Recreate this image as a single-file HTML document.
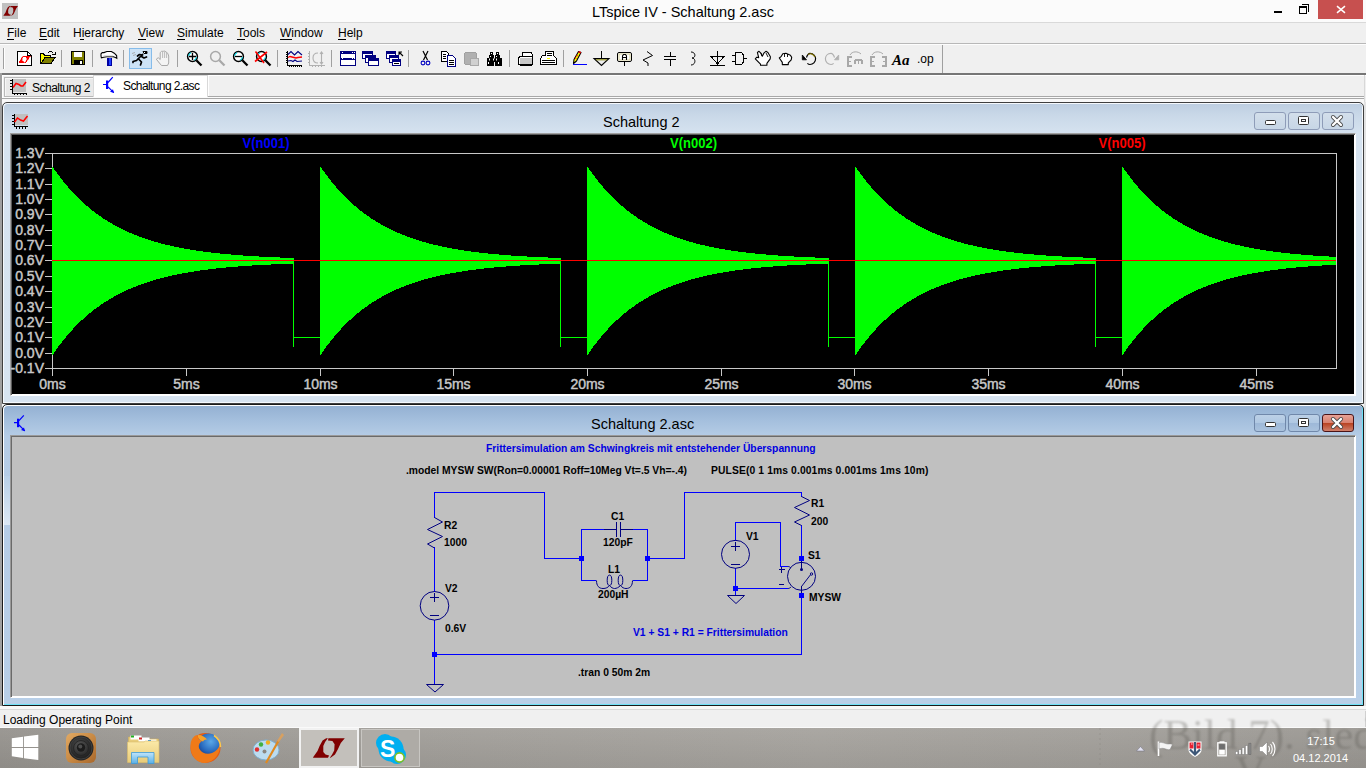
<!DOCTYPE html>
<html><head><meta charset="utf-8"><title>LTspice IV - Schaltung 2.asc</title>
<style>
*{margin:0;padding:0;box-sizing:border-box}
html,body{width:1366px;height:768px;overflow:hidden;background:#f0f0f0;font-family:"Liberation Sans",sans-serif;position:relative}
.a{position:absolute}
svg text{white-space:pre}
</style></head>
<body>
<div class="a" style="left:0;top:0;width:1366px;height:22px;background:#fbfbfb"></div>
<div class="a" style="left:0;top:22px;width:1366px;height:1px;background:#d9d9d9"></div>
<div class="a" style="left:0;top:43px;width:1366px;height:1px;background:#b8b8b8"></div>
<div class="a" style="left:0;top:44px;width:1366px;height:1px;background:#fdfdfd"></div>
<div class="a" style="left:0;top:73px;width:1366px;height:2px;background:#767676"></div>
<div class="a" style="left:0;top:75px;width:1366px;height:1px;background:#fff"></div>
<div class="a" style="left:1364px;top:75px;width:1px;height:27px;background:#d8d8d8"></div>
<!-- tabs -->
<div class="a" style="left:207px;top:75px;width:1157px;height:22px;background:#f0f0f0;border-left:1px solid #a0a0a0;border-bottom:1px solid #a8a8a8;box-shadow:inset 1px 1px 0 #fff"></div>
<div class="a" style="left:4px;top:77px;width:90px;height:20px;background:#e9e9e9;border:1px solid #b8b8b8;box-shadow:inset 1px 1px 0 #f6f6f6"></div>
<div class="a" style="left:93px;top:75px;width:115px;height:22px;background:#fff;border:1px solid #d9d9d9;border-bottom:none"></div>
<div class="a" style="left:0;top:97px;width:1364px;height:1px;background:#fbfbfb"></div>
<div class="a" style="left:0;top:98px;width:1364px;height:1px;background:#a8a8a8"></div>
<div class="a" style="left:0;top:99px;width:1364px;height:607px;background:#f8f8f8"></div>
<div class="a" style="left:0;top:73px;width:2px;height:633px;background:#a0a0a0"></div>
<div class="a" style="left:2px;top:76px;width:1px;height:22px;background:#fff"></div>
<div class="a" style="left:1364px;top:102px;width:2px;height:604px;background:#e3e3e3"></div>
<!-- plot window -->
<div class="a" style="left:2px;top:102px;width:1362px;height:302px;border:1px solid #3f3f3f;border-radius:5px 5px 0 0;background:linear-gradient(#bccde0,#c9d8e8 12px,#d6e3f0 31px,#d7e4f1);box-shadow:inset 1px 1px 0 #f4f8fc,inset -1px -1px 0 #f4f8fc"></div>
<div class="a" style="left:10px;top:133px;width:1346px;height:263px;background:#000;border-top:1px solid #a0a0a0;border-left:1px solid #a0a0a0;border-right:1px solid #fff;border-bottom:1px solid #fff;box-shadow:inset 1px 1px 0 #5a5a5a,inset -1px -1px 0 #fff"></div>
<div class="a" style="left:1254px;top:112px;width:32px;height:18px;border:1px solid #8e9cb8;border-radius:3px;background:linear-gradient(#d3dfeb,#c7d6e6)"></div>
<div class="a" style="left:1288px;top:112px;width:32px;height:18px;border:1px solid #8e9cb8;border-radius:3px;background:linear-gradient(#d3dfeb,#c7d6e6)"></div>
<div class="a" style="left:1322px;top:112px;width:32px;height:18px;border:1px solid #8e9cb8;border-radius:3px;background:linear-gradient(#d3dfeb,#c7d6e6)"></div>
<!-- schematic window -->
<div class="a" style="left:2px;top:404px;width:1362px;height:302px;border:1px solid #1a1a1a;border-radius:5px 5px 0 0;background:linear-gradient(#93b0d2,#a4bfdd 15px,#b5cce6 31px,#b8cfe8);box-shadow:inset 1px 1px 0 #fff,inset -1px -1px 0 #6ee2f8"></div>
<div class="a" style="left:10px;top:435px;width:1346px;height:263px;background:#c0c0c0;border-top:1px solid #9a9a9a;border-left:1px solid #9a9a9a;border-right:1px solid #fff;border-bottom:1px solid #fff;box-shadow:inset 1px 1px 0 #6a6a6a,inset -1px -1px 0 #fff"></div>
<div class="a" style="left:1254px;top:414px;width:32px;height:18px;border:1px solid #7088aa;border-radius:3px;background:linear-gradient(#bcd0e6 0,#b0c8e2 50%,#9db8d8 50%,#aac2dd)"></div>
<div class="a" style="left:1288px;top:414px;width:32px;height:18px;border:1px solid #7088aa;border-radius:3px;background:linear-gradient(#bcd0e6 0,#b0c8e2 50%,#9db8d8 50%,#aac2dd)"></div>
<div class="a" style="left:1322px;top:414px;width:32px;height:18px;border:1px solid #4a1418;border-radius:3px;background:linear-gradient(#e8a296 0,#d8806e 50%,#b8401f 50%,#d0806c)"></div>
<div class="a" style="left:4px;top:476px;width:6px;height:49px;background:linear-gradient(#b9d0e8,#dce8f4)"></div>
<!-- status -->
<div class="a" style="left:0;top:706px;width:1366px;height:3px;background:#f8f8f8"></div>
<div class="a" style="left:0;top:709px;width:1366px;height:1px;background:#dadada"></div>
<div class="a" style="left:0;top:710px;width:1366px;height:17px;background:#f0f0f0"></div>
<div class="a" style="left:0;top:727px;width:1366px;height:1px;background:#fafafa"></div>
<div class="a" style="left:1365px;top:711px;width:1px;height:16px;background:#d0d0d0"></div>
<!-- taskbar -->
<div class="a" style="left:0;top:728px;width:1366px;height:40px;background:linear-gradient(rgba(255,255,255,0.05),rgba(0,0,0,0.05)),linear-gradient(90deg,#96938e,#9c9994 10%,#a29f9a 35%,#a6a39e 60%,#a29f9a 80%,#9a9792)"></div>
<svg class="a" style="left:0;top:0" width="1366" height="768" viewBox="0 0 1366 768" font-family="Liberation Sans">
<g fill="#000" font-size="14.5">
 <text x="592" y="16.5">LTspice IV - Schaltung 2.asc</text>
 <text x="603" y="127">Schaltung 2</text>
 <text x="591" y="428.5">Schaltung 2.asc</text>
</g>
<g fill="#000" font-size="12">
 <text x="7" y="37">File</text><text x="39" y="37">Edit</text><text x="73" y="37">Hierarchy</text><text x="138" y="37">View</text><text x="177" y="37">Simulate</text><text x="237" y="37">Tools</text><text x="280" y="37">Window</text><text x="338" y="37">Help</text>
 <text x="32" y="91.5" letter-spacing="-0.5">Schaltung 2</text>
 <text x="123" y="90" letter-spacing="-0.6">Schaltung 2.asc</text>
 <text x="3" y="724">Loading Operating Point</text>
</g>
<g stroke="#000" shape-rendering="crispEdges">
 <path d="M7,39.5H14M39,39.5H47M80,39.5H84M138,39.5H146M177,39.5H185M237,39.5H245M280,39.5H292M338,39.5H346"/>
</g>
<!-- title icon -->
<rect x="2" y="3" width="16" height="16" fill="#c0c0c0"/>
<path d="M10.27,6.00L9.49,6.00L7.85,7.21L6.52,9.77L5.51,12.48L3.50,15.60L3.50,15.80L10.32,15.80L10.82,14.69L9.17,14.14L8.17,12.89L8.17,9.92L8.99,7.91ZM10.50,6.00L18.00,6.00L16.17,8.46L14.84,11.58L13.52,14.14L11.50,15.80L11.18,15.80L12.19,14.14L13.15,12.13L13.33,9.02L12.33,7.36L10.32,7.21Z" fill="#800000"/>
<!-- window controls main -->
<g stroke="#000" fill="none" shape-rendering="crispEdges">
 <path d="M1274,12H1282" stroke-width="2"/>
 <rect x="1299.5" y="6.5" width="7" height="7"/><path d="M1300,7.5H1306"/><path d="M1301.5,4.5H1308.5V11.5"/>
</g>
<rect x="1318" y="0" width="45" height="19" fill="#c7504f"/>
<path d="M1337,6.2L1345,12.8M1345,6.2L1337,12.8" stroke="#fff" stroke-width="1.5"/>
<!-- tab icons -->
<g shape-rendering="crispEdges">
 <rect x="13" y="79" width="13" height="13" fill="#c0c0c0"/>
 <path d="M12.5,79V93.5H26M10,80.5H12M10,83.5H12M10,86.5H12M10,89.5H12M14.5,93V95M17.5,93V95M20.5,93V95M23.5,93V95M26.5,93V95" stroke="#000" fill="none"/>
</g>
<path d="M13,87.5L16,83.5L19,84.5L21,86L23,86L26,82" stroke="#ff0000" stroke-width="1.6" fill="none"/>
<path d="M103,84.5H106.5M108,82.5L112.8,77.2M108,86.8L113.8,92.6" stroke="#0000ff" stroke-width="1.2" fill="none"/><rect x="106" y="80.5" width="2.2" height="8.5" fill="#0000ff"/><path d="M110,91.8L114,93L113,89.2Z" fill="#0000ff"/>
<rect x="52.5" y="153.5" width="1284" height="215" fill="none" stroke="#c8c8c8" shape-rendering="crispEdges"/>
<path d="M52,167H53V168H54V170H55V171H56V172H57V174H58V175H59V176H60V178H61V179H62V180H63V182H64V183H65V184H66V185H67V186H68V188H69V189H70V190H71V191H72V192H73V193H74V194H75V195H76V196H77V197H78V198H79V199H80V200H81V201H82V202H83V203H84V204H85V205H86V206H87H88V207H89V208H90V209H91V210H92V211H93H94V212H95V213H96V214H97H98V215H99V216H100H101V217H102V218H103V219H104H105V220H106H107V221H108V222H109H110V223H111H112V224H113V225H114H115V226H116H117V227H118H119V228H120H121V229H122H123V230H124H125V231H126H127V232H128H129V233H130H131H132V234H133H134V235H135H136H137V236H138H139V237H140H141H142V238H143H144H145V239H146H147H148V240H149H150H151V241H152H153H154V242H155H156H157H158V243H159H160H161V244H162H163H164H165V245H166H167H168H169H170V246H171H172H173H174V247H175H176H177H178H179V248H180H181H182H183H184V249H185H186H187H188H189H190V250H191H192H193H194H195H196V251H197H198H199H200H201H202H203V252H204H205H206H207H208H209H210H211V253H212H213H214H215H216H217H218H219H220V254H221H222H223H224H225H226H227H228H229H230H231V255H232H233H234H235H236H237H238H239H240H241H242H243V256H244H245H246H247H248H249H250H251H252H253H254H255H256H257H258H259V257H260H261H262H263H264H265H266H267H268H269H270H271H272H273H274H275H276H277H278H279H280V258H281H282H283H284H285H286H287H288H289H290H291H292H293H294V264H293H292H291H290H289H288H287H286H285H284H283H282H281H280H279H278H277H276H275H274H273H272H271V265H270H269H268H267H266H265H264H263H262H261H260H259H258H257H256H255H254H253H252V266H251H250H249H248H247H246H245H244H243H242H241H240H239H238V267H237H236H235H234H233H232H231H230H229H228H227H226V268H225H224H223H222H221H220H219H218H217H216V269H215H214H213H212H211H210H209H208V270H207H206H205H204H203H202H201H200V271H199H198H197H196H195H194V272H193H192H191H190H189H188V273H187H186H185H184H183H182V274H181H180H179H178H177V275H176H175H174H173H172V276H171H170H169H168V277H167H166H165H164V278H163H162H161H160V279H159H158H157H156V280H155H154H153V281H152H151H150V282H149H148H147V283H146H145H144V284H143H142H141V285H140H139H138V286H137H136V287H135H134H133V288H132H131V289H130H129H128V290H127H126V291H125H124V292H123H122V293H121H120V294H119H118V295H117H116V296H115H114V297H113V298H112H111V299H110H109V300H108V301H107H106V302H105H104V303H103V304H102H101V305H100V306H99V307H98H97V308H96V309H95H94V310H93V311H92V312H91V313H90H89V314H88V315H87V316H86V317H85V318H84V319H83V320H82H81V321H80V322H79V323H78V324H77V325H76V326H75V327H74V328H73V330H72V331H71V332H70V333H69V334H68V335H67V336H66V338H65V339H64V340H63V341H62V343H61V344H60V345H59V346H58V348H57V349H56V351H55V352H54V354H53V355H52ZM320,167H321V168H322V170H323V171H324V172H325V174H326V175H327V176H328V178H329V179H330V180H331V182H332V183H333V184H334V185H335V186H336V188H337V189H338V190H339V191H340V192H341V193H342V194H343V195H344V196H345V197H346V198H347V199H348V200H349V201H350V202H351V203H352V204H353V205H354V206H355H356V207H357V208H358V209H359V210H360V211H361H362V212H363V213H364V214H365H366V215H367V216H368H369V217H370V218H371V219H372H373V220H374H375V221H376V222H377H378V223H379H380V224H381V225H382H383V226H384H385V227H386H387V228H388H389V229H390H391V230H392H393V231H394H395V232H396H397V233H398H399H400V234H401H402V235H403H404H405V236H406H407V237H408H409H410V238H411H412H413V239H414H415H416V240H417H418H419V241H420H421H422V242H423H424H425H426V243H427H428H429V244H430H431H432H433V245H434H435H436H437H438V246H439H440H441H442V247H443H444H445H446H447V248H448H449H450H451H452V249H453H454H455H456H457H458V250H459H460H461H462H463H464V251H465H466H467H468H469H470H471V252H472H473H474H475H476H477H478H479V253H480H481H482H483H484H485H486H487H488V254H489H490H491H492H493H494H495H496H497H498H499V255H500H501H502H503H504H505H506H507H508H509H510H511V256H512H513H514H515H516H517H518H519H520H521H522H523H524H525H526H527V257H528H529H530H531H532H533H534H535H536H537H538H539H540H541H542H543H544H545H546H547H548V258H549H550H551H552H553H554H555H556H557H558H559H560H561V264H560H559H558H557H556H555H554H553H552H551H550H549H548H547H546H545H544H543H542H541H540H539V265H538H537H536H535H534H533H532H531H530H529H528H527H526H525H524H523H522H521H520V266H519H518H517H516H515H514H513H512H511H510H509H508H507H506V267H505H504H503H502H501H500H499H498H497H496H495H494V268H493H492H491H490H489H488H487H486H485H484V269H483H482H481H480H479H478H477H476V270H475H474H473H472H471H470H469H468V271H467H466H465H464H463H462V272H461H460H459H458H457H456V273H455H454H453H452H451H450V274H449H448H447H446H445V275H444H443H442H441H440V276H439H438H437H436V277H435H434H433H432V278H431H430H429H428V279H427H426H425H424V280H423H422H421V281H420H419H418V282H417H416H415V283H414H413H412V284H411H410H409V285H408H407H406V286H405H404V287H403H402H401V288H400H399V289H398H397H396V290H395H394V291H393H392V292H391H390V293H389H388V294H387H386V295H385H384V296H383H382V297H381V298H380H379V299H378H377V300H376V301H375H374V302H373H372V303H371V304H370H369V305H368V306H367V307H366H365V308H364V309H363H362V310H361V311H360V312H359V313H358H357V314H356V315H355V316H354V317H353V318H352V319H351V320H350H349V321H348V322H347V323H346V324H345V325H344V326H343V327H342V328H341V330H340V331H339V332H338V333H337V334H336V335H335V336H334V338H333V339H332V340H331V341H330V343H329V344H328V345H327V346H326V348H325V349H324V351H323V352H322V354H321V355H320ZM587,167H588V168H589V170H590V171H591V172H592V174H593V175H594V176H595V178H596V179H597V180H598V182H599V183H600V184H601V185H602V186H603V188H604V189H605V190H606V191H607V192H608V193H609V194H610V195H611V196H612V197H613V198H614V199H615V200H616V201H617V202H618V203H619V204H620V205H621V206H622H623V207H624V208H625V209H626V210H627V211H628H629V212H630V213H631V214H632H633V215H634V216H635H636V217H637V218H638V219H639H640V220H641H642V221H643V222H644H645V223H646H647V224H648V225H649H650V226H651H652V227H653H654V228H655H656V229H657H658V230H659H660V231H661H662V232H663H664V233H665H666H667V234H668H669V235H670H671H672V236H673H674V237H675H676H677V238H678H679H680V239H681H682H683V240H684H685H686V241H687H688H689V242H690H691H692H693V243H694H695H696V244H697H698H699H700V245H701H702H703H704H705V246H706H707H708H709V247H710H711H712H713H714V248H715H716H717H718H719V249H720H721H722H723H724H725V250H726H727H728H729H730H731V251H732H733H734H735H736H737H738V252H739H740H741H742H743H744H745H746V253H747H748H749H750H751H752H753H754H755V254H756H757H758H759H760H761H762H763H764H765H766V255H767H768H769H770H771H772H773H774H775H776H777H778V256H779H780H781H782H783H784H785H786H787H788H789H790H791H792H793H794V257H795H796H797H798H799H800H801H802H803H804H805H806H807H808H809H810H811H812H813H814H815V258H816H817H818H819H820H821H822H823H824H825H826H827H828H829V264H828H827H826H825H824H823H822H821H820H819H818H817H816H815H814H813H812H811H810H809H808H807H806V265H805H804H803H802H801H800H799H798H797H796H795H794H793H792H791H790H789H788H787V266H786H785H784H783H782H781H780H779H778H777H776H775H774H773V267H772H771H770H769H768H767H766H765H764H763H762H761V268H760H759H758H757H756H755H754H753H752H751V269H750H749H748H747H746H745H744H743V270H742H741H740H739H738H737H736H735V271H734H733H732H731H730H729V272H728H727H726H725H724H723V273H722H721H720H719H718H717V274H716H715H714H713H712V275H711H710H709H708H707V276H706H705H704H703V277H702H701H700H699V278H698H697H696H695V279H694H693H692H691V280H690H689H688V281H687H686H685V282H684H683H682V283H681H680H679V284H678H677H676V285H675H674H673V286H672H671V287H670H669H668V288H667H666V289H665H664H663V290H662H661V291H660H659V292H658H657V293H656H655V294H654H653V295H652H651V296H650H649V297H648V298H647H646V299H645H644V300H643V301H642H641V302H640H639V303H638V304H637H636V305H635V306H634V307H633H632V308H631V309H630H629V310H628V311H627V312H626V313H625H624V314H623V315H622V316H621V317H620V318H619V319H618V320H617H616V321H615V322H614V323H613V324H612V325H611V326H610V327H609V328H608V330H607V331H606V332H605V333H604V334H603V335H602V336H601V338H600V339H599V340H598V341H597V343H596V344H595V345H594V346H593V348H592V349H591V351H590V352H589V354H588V355H587ZM855,167H856V168H857V170H858V171H859V172H860V174H861V175H862V176H863V178H864V179H865V180H866V182H867V183H868V184H869V185H870V186H871V188H872V189H873V190H874V191H875V192H876V193H877V194H878V195H879V196H880V197H881V198H882V199H883V200H884V201H885V202H886V203H887V204H888V205H889V206H890H891V207H892V208H893V209H894V210H895V211H896H897V212H898V213H899V214H900H901V215H902V216H903H904V217H905V218H906V219H907H908V220H909H910V221H911V222H912H913V223H914H915V224H916V225H917H918V226H919H920V227H921H922V228H923H924V229H925H926V230H927H928V231H929H930V232H931H932V233H933H934H935V234H936H937V235H938H939H940V236H941H942V237H943H944H945V238H946H947H948V239H949H950H951V240H952H953H954V241H955H956H957V242H958H959H960H961V243H962H963H964V244H965H966H967H968V245H969H970H971H972H973V246H974H975H976H977V247H978H979H980H981H982V248H983H984H985H986H987V249H988H989H990H991H992H993V250H994H995H996H997H998H999V251H1000H1001H1002H1003H1004H1005H1006V252H1007H1008H1009H1010H1011H1012H1013H1014V253H1015H1016H1017H1018H1019H1020H1021H1022H1023V254H1024H1025H1026H1027H1028H1029H1030H1031H1032H1033H1034V255H1035H1036H1037H1038H1039H1040H1041H1042H1043H1044H1045H1046V256H1047H1048H1049H1050H1051H1052H1053H1054H1055H1056H1057H1058H1059H1060H1061H1062V257H1063H1064H1065H1066H1067H1068H1069H1070H1071H1072H1073H1074H1075H1076H1077H1078H1079H1080H1081H1082H1083V258H1084H1085H1086H1087H1088H1089H1090H1091H1092H1093H1094H1095H1096V264H1095H1094H1093H1092H1091H1090H1089H1088H1087H1086H1085H1084H1083H1082H1081H1080H1079H1078H1077H1076H1075H1074V265H1073H1072H1071H1070H1069H1068H1067H1066H1065H1064H1063H1062H1061H1060H1059H1058H1057H1056H1055V266H1054H1053H1052H1051H1050H1049H1048H1047H1046H1045H1044H1043H1042H1041V267H1040H1039H1038H1037H1036H1035H1034H1033H1032H1031H1030H1029V268H1028H1027H1026H1025H1024H1023H1022H1021H1020H1019V269H1018H1017H1016H1015H1014H1013H1012H1011V270H1010H1009H1008H1007H1006H1005H1004H1003V271H1002H1001H1000H999H998H997V272H996H995H994H993H992H991V273H990H989H988H987H986H985V274H984H983H982H981H980V275H979H978H977H976H975V276H974H973H972H971V277H970H969H968H967V278H966H965H964H963V279H962H961H960H959V280H958H957H956V281H955H954H953V282H952H951H950V283H949H948H947V284H946H945H944V285H943H942H941V286H940H939V287H938H937H936V288H935H934V289H933H932H931V290H930H929V291H928H927V292H926H925V293H924H923V294H922H921V295H920H919V296H918H917V297H916V298H915H914V299H913H912V300H911V301H910H909V302H908H907V303H906V304H905H904V305H903V306H902V307H901H900V308H899V309H898H897V310H896V311H895V312H894V313H893H892V314H891V315H890V316H889V317H888V318H887V319H886V320H885H884V321H883V322H882V323H881V324H880V325H879V326H878V327H877V328H876V330H875V331H874V332H873V333H872V334H871V335H870V336H869V338H868V339H867V340H866V341H865V343H864V344H863V345H862V346H861V348H860V349H859V351H858V352H857V354H856V355H855ZM1122,167H1123V168H1124V170H1125V171H1126V172H1127V174H1128V175H1129V176H1130V178H1131V179H1132V180H1133V182H1134V183H1135V184H1136V185H1137V186H1138V188H1139V189H1140V190H1141V191H1142V192H1143V193H1144V194H1145V195H1146V196H1147V197H1148V198H1149V199H1150V200H1151V201H1152V202H1153V203H1154V204H1155V205H1156V206H1157H1158V207H1159V208H1160V209H1161V210H1162V211H1163H1164V212H1165V213H1166V214H1167H1168V215H1169V216H1170H1171V217H1172V218H1173V219H1174H1175V220H1176H1177V221H1178V222H1179H1180V223H1181H1182V224H1183V225H1184H1185V226H1186H1187V227H1188H1189V228H1190H1191V229H1192H1193V230H1194H1195V231H1196H1197V232H1198H1199V233H1200H1201H1202V234H1203H1204V235H1205H1206H1207V236H1208H1209V237H1210H1211H1212V238H1213H1214H1215V239H1216H1217H1218V240H1219H1220H1221V241H1222H1223H1224V242H1225H1226H1227H1228V243H1229H1230H1231V244H1232H1233H1234H1235V245H1236H1237H1238H1239H1240V246H1241H1242H1243H1244V247H1245H1246H1247H1248H1249V248H1250H1251H1252H1253H1254V249H1255H1256H1257H1258H1259H1260V250H1261H1262H1263H1264H1265H1266V251H1267H1268H1269H1270H1271H1272H1273V252H1274H1275H1276H1277H1278H1279H1280H1281V253H1282H1283H1284H1285H1286H1287H1288H1289H1290V254H1291H1292H1293H1294H1295H1296H1297H1298H1299H1300H1301V255H1302H1303H1304H1305H1306H1307H1308H1309H1310H1311H1312H1313V256H1314H1315H1316H1317H1318H1319H1320H1321H1322H1323H1324H1325H1326H1327H1328H1329V257H1330H1331H1332H1333H1334H1335H1336V265H1335H1334H1333H1332H1331H1330H1329H1328H1327H1326H1325H1324H1323H1322V266H1321H1320H1319H1318H1317H1316H1315H1314H1313H1312H1311H1310H1309H1308V267H1307H1306H1305H1304H1303H1302H1301H1300H1299H1298H1297H1296V268H1295H1294H1293H1292H1291H1290H1289H1288H1287H1286V269H1285H1284H1283H1282H1281H1280H1279H1278V270H1277H1276H1275H1274H1273H1272H1271H1270V271H1269H1268H1267H1266H1265H1264V272H1263H1262H1261H1260H1259H1258V273H1257H1256H1255H1254H1253H1252V274H1251H1250H1249H1248H1247V275H1246H1245H1244H1243H1242V276H1241H1240H1239H1238V277H1237H1236H1235H1234V278H1233H1232H1231H1230V279H1229H1228H1227H1226V280H1225H1224H1223V281H1222H1221H1220V282H1219H1218H1217V283H1216H1215H1214V284H1213H1212H1211V285H1210H1209H1208V286H1207H1206V287H1205H1204H1203V288H1202H1201V289H1200H1199H1198V290H1197H1196V291H1195H1194V292H1193H1192V293H1191H1190V294H1189H1188V295H1187H1186V296H1185H1184V297H1183V298H1182H1181V299H1180H1179V300H1178V301H1177H1176V302H1175H1174V303H1173V304H1172H1171V305H1170V306H1169V307H1168H1167V308H1166V309H1165H1164V310H1163V311H1162V312H1161V313H1160H1159V314H1158V315H1157V316H1156V317H1155V318H1154V319H1153V320H1152H1151V321H1150V322H1149V323H1148V324H1147V325H1146V326H1145V327H1144V328H1143V330H1142V331H1141V332H1140V333H1139V334H1138V335H1137V336H1136V338H1135V339H1134V340H1133V341H1132V343H1131V344H1130V345H1129V346H1128V348H1127V349H1126V351H1125V352H1124V354H1123V355H1122Z" fill="#00ff00" shape-rendering="crispEdges"/>
<path d="M293.5,262V347M293,337.5H320M560.5,262V347M560,337.5H587M828.5,262V347M828,337.5H855M1095.5,262V347M1095,337.5H1122" stroke="#00ff00" fill="none" shape-rendering="crispEdges"/>
<path d="M52,260.5H1336" stroke="#ff0000" fill="none" shape-rendering="crispEdges"/>
<path d="M45,153.5H52M45,168.5H52M45,184.5H52M45,199.5H52M45,214.5H52M45,230.5H52M45,245.5H52M45,260.5H52M45,276.5H52M45,291.5H52M45,307.5H52M45,322.5H52M45,337.5H52M45,353.5H52M45,368.5H52M52.5,368V376M186.5,368V376M320.5,368V376M453.5,368V376M587.5,368V376M721.5,368V376M854.5,368V376M988.5,368V376M1122.5,368V376M1256.5,368V376" stroke="#c8c8c8" shape-rendering="crispEdges"/>
<g font-size="14" fill="#c8c8c8" stroke="#c8c8c8" stroke-width="0.45"><text x="44" y="158" text-anchor="end">1.3V</text><text x="44" y="173" text-anchor="end">1.2V</text><text x="44" y="189" text-anchor="end">1.1V</text><text x="44" y="204" text-anchor="end">1.0V</text><text x="44" y="219" text-anchor="end">0.9V</text><text x="44" y="235" text-anchor="end">0.8V</text><text x="44" y="250" text-anchor="end">0.7V</text><text x="44" y="265" text-anchor="end">0.6V</text><text x="44" y="281" text-anchor="end">0.5V</text><text x="44" y="296" text-anchor="end">0.4V</text><text x="44" y="312" text-anchor="end">0.3V</text><text x="44" y="327" text-anchor="end">0.2V</text><text x="44" y="342" text-anchor="end">0.1V</text><text x="44" y="358" text-anchor="end">0.0V</text><text x="44" y="373" text-anchor="end">-0.1V</text><text x="52.5" y="389" text-anchor="middle">0ms</text><text x="186.5" y="389" text-anchor="middle">5ms</text><text x="320.5" y="389" text-anchor="middle">10ms</text><text x="453.5" y="389" text-anchor="middle">15ms</text><text x="587.5" y="389" text-anchor="middle">20ms</text><text x="721.5" y="389" text-anchor="middle">25ms</text><text x="854.5" y="389" text-anchor="middle">30ms</text><text x="988.5" y="389" text-anchor="middle">35ms</text><text x="1122.5" y="389" text-anchor="middle">40ms</text><text x="1256.5" y="389" text-anchor="middle">45ms</text></g>

<g font-weight="bold" font-size="14" text-anchor="middle" lengthAdjust="spacingAndGlyphs">
 <text x="266" y="148" fill="#0000ff" textLength="47" lengthAdjust="spacingAndGlyphs">V(n001)</text>
 <text x="693.5" y="148" fill="#00ff00" textLength="47" lengthAdjust="spacingAndGlyphs">V(n002)</text>
 <text x="1122" y="148" fill="#ff0000" textLength="47" lengthAdjust="spacingAndGlyphs">V(n005)</text>
</g>
<g transform="translate(-0.5,1)"><!-- plot icon -->
<g shape-rendering="crispEdges">
 <rect x="15" y="113" width="13" height="11" fill="#c0c0c0"/>
 <path d="M14.5,113V125.5H28M12,114.5H14M12,117.5H14M12,120.5H14M12,123.5H14M16.5,125V128M19.5,125V128M22.5,125V128M25.5,125V128" stroke="#000" fill="none"/>
</g>
<path d="M15,121L18,117L21,119L24,120L28,115" stroke="#ff0000" stroke-width="1.5" fill="none"/>
</g>
<!-- plot window buttons -->
<g fill="#fff" stroke="#333" stroke-width="1">
 <rect x="1265.5" y="120.5" width="10" height="4" rx="1"/>
 <rect x="1298.5" y="116.5" width="10" height="8" rx="1"/>
</g>
<rect x="1301.5" y="119.5" width="4" height="2" fill="none" stroke="#333"/>
<path d="M1333,117L1341,125M1341,117L1333,125" stroke="#4a4a4a" stroke-width="4" stroke-linecap="round"/>
<path d="M1333,117L1341,125M1341,117L1333,125" stroke="#fff" stroke-width="2.4" stroke-linecap="round"/>
<!-- schematic window icon -->
<g transform="translate(-89,338.2)"><path d="M103,84.5H106.5M108,82.5L112.8,77.2M108,86.8L113.8,92.6" stroke="#0000ff" stroke-width="1.2" fill="none"/><rect x="106" y="80.5" width="2.2" height="8.5" fill="#0000ff"/><path d="M110,91.8L114,93L113,89.2Z" fill="#0000ff"/></g>
<g fill="#fff" stroke="#333" stroke-width="1">
 <rect x="1265.5" y="422.5" width="10" height="4" rx="1"/>
 <rect x="1298.5" y="418.5" width="10" height="8" rx="1"/>
</g>
<rect x="1301.5" y="421.5" width="4" height="2" fill="none" stroke="#333"/>
<path d="M1333,419L1341,427M1341,419L1333,427" stroke="#4a4a4a" stroke-width="4" stroke-linecap="round"/>
<path d="M1333,419L1341,427M1341,419L1333,427" stroke="#fff" stroke-width="2.4" stroke-linecap="round"/>
<!-- wires -->
<path d="M434.5,492.5H544.5V558.5H581.5M434.5,492V518M434.5,547V592M434.5,620V684M434.5,654.5H801.5V595M581.5,529.5H604M581.5,529V580.5H596M647.5,529.5H633M647.5,529V580.5H633M647.5,558.5H684.5V492.5H801.5V497M801.5,525V559M735.5,541V522.5H780.5V566.5H788M735.5,568V588.5H788M735.5,588V596" stroke="#0000ff" fill="none" shape-rendering="crispEdges"/>
<!-- symbols navy -->
<g stroke="#000080" fill="none">
 <path d="M434.5,517.5L442.5,522L427.5,529.5L442.5,536.5L427.5,544L434.5,548"/>
 <path d="M801.5,496.5L809.5,500.5L794.5,507.5L809.5,515L794.5,522L801.5,525.5"/>
 <circle cx="434.5" cy="605.8" r="14.3"/>
 <circle cx="735.5" cy="554.3" r="14"/>
 <circle cx="801.5" cy="576.3" r="14"/>
 <path d="M430,597.5H439M434.5,593V602M430,615.5H439" shape-rendering="crispEdges"/>
 <path d="M731,546.5H740M735.5,542V551M731,564.5H740" shape-rendering="crispEdges"/>
 <path d="M778.5,569.5H784.5M781.5,566.5V572.5M779,584.5H784" shape-rendering="crispEdges"/>
 <path d="M604,529.5H616.5M620.5,529.5H633M616.5,522V537M620.5,522V537" shape-rendering="crispEdges"/>
 <path d="M596.5,580.5C596.5,586 599,588.5 603,588.5C606,588.5 608,587.5 609.5,585.5C611,587.5 613,588.5 614.5,588.5C616.5,588.5 618.5,587.5 620.5,585.5C622,587.5 624,588.5 626,588.5C630,588.5 632.5,586 632.5,580.5"/>
 <ellipse cx="609.5" cy="580.3" rx="2.3" ry="5.2"/>
 <ellipse cx="620.5" cy="580.3" rx="2.3" ry="5.2"/>
 <path d="M426.5,684.5H443.5L435,692Z"/>
 <path d="M727.5,595.5H744.5L736,603.5Z"/>
 <path d="M801.5,559V569.5M801.5,586.5L810.3,575M801.5,586V593" />
 <circle cx="811.5" cy="574" r="1.2"/>
 <path d="M788,566.5C789,566.5 790,567 791,568M788,588.5C789,588.5 790,588 791,587"/>
</g>
<circle cx="801.5" cy="569.5" r="1.5" fill="#000080"/>
<!-- junctions -->
<g fill="#0000ff" shape-rendering="crispEdges">
 <rect x="432" y="652" width="5" height="5"/>
 <rect x="579" y="556" width="5" height="5"/>
 <rect x="645" y="556" width="5" height="5"/>
 <rect x="799" y="556" width="5" height="5"/>
 <rect x="799" y="593" width="5" height="5"/>
 <rect x="733" y="586" width="5" height="5"/>
</g>
<!-- labels -->
<g font-weight="bold" font-size="10.3" fill="#000">
 <text x="444" y="529">R2</text>
 <text x="444" y="546">1000</text>
 <text x="445" y="592">V2</text>
 <text x="445" y="632">0.6V</text>
 <text x="611" y="520">C1</text>
 <text x="603" y="546">120pF</text>
 <text x="608" y="573">L1</text>
 <text x="598" y="598">200µH</text>
 <text x="811" y="507">R1</text>
 <text x="811" y="524.5">200</text>
 <text x="746" y="540">V1</text>
 <text x="808" y="559">S1</text>
 <text x="809" y="601">MYSW</text>
 <text x="406" y="474">.model MYSW SW(Ron=0.00001 Roff=10Meg Vt=.5 Vh=-.4)</text>
 <text x="711" y="474" letter-spacing="0.12">PULSE(0 1 1ms 0.001ms 0.001ms 1ms 10m)</text>
 <text x="578" y="676">.tran 0 50m 2m</text>
</g>
<g font-weight="bold" font-size="10.3" fill="#0000e0">
 <text x="486" y="452">Frittersimulation am Schwingkreis mit entstehender Überspannung</text>
 <text x="633" y="636">V1 + S1 + R1 = Frittersimulation</text>
</g>
<g shape-rendering="crispEdges">
 <!-- gripper -->
 <path d="M3.5,48V69" stroke="#a0a0a0"/><path d="M4.5,48V69" stroke="#fff"/>
 <!-- separators -->
 <path d="M61.5,50V67M92.5,50V67M123.5,50V67M177.5,50V67M277.5,50V67M331.5,50V67M408.5,50V67M509.5,50V67M563.5,50V67M942.5,45V73" stroke="#a0a0a0"/>
 <!-- new doc -->
 <path d="M17.5,51.5H27.5L31.5,55.5V65.5H17.5Z" fill="#fff" stroke="#000"/>
 <path d="M27.5,51.5V55.5H31.5" fill="none" stroke="#000"/>
 <path d="M24.10,56.00L23.46,56.00L22.10,56.84L21.00,58.62L20.17,60.50L18.50,62.66L18.50,62.80L24.14,62.80L24.56,62.03L23.19,61.65L22.36,60.78L22.36,58.72L23.04,57.33ZM24.29,56.00L30.50,56.00L28.99,57.71L27.89,59.87L26.79,61.65L25.12,62.80L24.86,62.80L25.69,61.65L26.49,60.25L26.64,58.09L25.81,56.94L24.14,56.84Z" fill="#ff0000" stroke="#ff0000" stroke-width="0.4"/>
 <!-- open -->
 <path d="M40.5,53.5H43.5L44.5,55.5H50.5V57.5H45L41,63.5H40.5Z" fill="#ffff00" stroke="#000"/>
 <path d="M41,63.5L45,57.5H55L51,63.5Z" fill="#808000" stroke="#000"/>
 <path d="M48,53C49,51 52,51 53,53" fill="none" stroke="#000"/><path d="M52,54H55V52" fill="none" stroke="#000"/>
 <!-- save -->
 <rect x="71.5" y="51.5" width="13" height="13" fill="#808000" stroke="#000"/>
 <rect x="74" y="52" width="8" height="5" fill="#fff"/>
 <rect x="74" y="60" width="9" height="5" fill="#000"/>
 <rect x="80" y="61" width="2" height="3" fill="#fff"/>
 <!-- hammer -->
 <path d="M101,53.8L102.2,52.6H104L106.8,51.5H111.4L114.3,53.2L116.6,55.5L116.8,58.3L115.4,57.6L112.6,56.6H106.7L103.8,57.2L101.4,57.8L101,56Z" fill="#fff" stroke="#000" stroke-width="1.1" shape-rendering="auto"/>
 <path d="M103.5,56H113" stroke="#c0c0c0" stroke-width="1" shape-rendering="auto"/>
 <rect x="107" y="57.5" width="5" height="8.5" fill="#0000a0"/>
 <rect x="108.5" y="58" width="2" height="7" fill="#2040ff"/>
<!-- run button -->
 <rect x="129.5" y="48.5" width="22" height="20" fill="#cde3f6" stroke="#86bcea"/>
</g>
<g stroke="#000" stroke-width="1.7" fill="none" stroke-linecap="round" stroke-linejoin="round">
 <path d="M142.5,54.5L136.5,60.5L133,61.5V62.5"/>
 <path d="M142.5,55L139.5,54.5L137.5,56"/>
 <path d="M141.5,56.5L144,58L146.5,57"/>
 <path d="M138.5,59L141.5,62L140.5,65"/>
</g>
<path d="M143,51.5H147V53.5H144Z" fill="#000" stroke="#000" stroke-width="1"/>
<rect x="144" y="52" width="1" height="1" fill="#fff"/>
<path d="M132,53.5L135,52.5M133,55.5L136,54.5" stroke="#a0a0a0" stroke-width="0.8"/>
<!-- hand disabled -->
<path d="M156.3,59.2L158.2,57.7L160.2,59.5V52.6L161.6,51.3H163.3L164.3,51L166,51.9L167.8,53.4L168.7,56V63L167.5,65.5H161.5L159.4,63Z" fill="#f4f4f4" stroke="#a8a8a8" stroke-width="1"/>
<path d="M162.6,52V58M164.6,51.5V58M166.6,52.5V58" stroke="#b4b4b4" stroke-width="0.9"/>
<!-- zoom in -->
<g fill="none"><circle cx="192.5" cy="56.5" r="4.9" stroke="#000" stroke-width="1.5" fill="#fff"/><path d="M196.3,60.3L201.5,65.5" stroke="#000" stroke-width="2.3"/><path d="M188.6,56.0A4,4 0 0 1 191.0,52.8M196.4,57.0A4,4 0 0 1 194.0,60.2" stroke="#00e0f0" stroke-width="1.1" fill="none"/><path d="M189,56.5H196M192.5,53V60" stroke="#000" stroke-width="1.3"/><circle cx="238.5" cy="56.5" r="4.9" stroke="#000" stroke-width="1.5" fill="#fff"/><path d="M242.3,60.3L247.5,65.5" stroke="#000" stroke-width="2.3"/><path d="M234.6,56.0A4,4 0 0 1 237.0,52.8M242.4,57.0A4,4 0 0 1 240.0,60.2" stroke="#00e0f0" stroke-width="1.1" fill="none"/><path d="M235,56.5H242" stroke="#000" stroke-width="1.3"/><circle cx="261.5" cy="56.5" r="4.9" stroke="#000" stroke-width="1.5" fill="#fff"/><path d="M265.3,60.3L270.5,65.5" stroke="#000" stroke-width="2.3"/><path d="M257.6,56.0A4,4 0 0 1 260.0,52.8M265.4,57.0A4,4 0 0 1 263.0,60.2" stroke="#00e0f0" stroke-width="1.1" fill="none"/></g>
<path d="M255.5,51.5L264,63M267,52L255,61.5" stroke="#ff0000" stroke-width="1.6"/>
<g fill="none"><circle cx="215.5" cy="56.5" r="4.9" stroke="#a8a8a8" stroke-width="1.5" fill="none"/><path d="M219.3,60.3L224.5,65.5" stroke="#a8a8a8" stroke-width="2.3"/></g>
<!-- chart icons -->
<g shape-rendering="crispEdges" fill="none">
 <path d="M287.5,51V65.5H302" stroke="#000"/>
 <path d="M286,52.5H287M286,54.5H287M286,56.5H287M286,58.5H287M286,60.5H287M286,62.5H287M289.5,66V67M291.5,66V67M293.5,66V67M295.5,66V67M297.5,66V67M299.5,66V67M301.5,66V67" stroke="#000"/>
 <rect x="309.5" y="51" width="0" height="0"/>
 <path d="M309.5,51V65.5H325" stroke="#b0b0b0"/>
 <path d="M308,53.5H309M308,56.5H309M308,59.5H309M308,62.5H309M312.5,66V67M315.5,66V67M318.5,66V67M321.5,66V67" stroke="#b0b0b0"/>
</g>
<path d="M288,54.5L291,51.5L294.5,55L298,51.5L302,55" stroke="#000080" stroke-width="1.1" fill="none"/>
<path d="M288,57.5L290,56.5L292,57L294,57.5L296,58L298,57.5L302,57" stroke="#ff0000" stroke-width="1.3" fill="none"/>
<path d="M288,61L291,60.5L293,61.5L295,60L297,61.5L302,61" stroke="#000080" stroke-width="1.2" fill="none"/>
<path d="M318,53C314,53 313,55 313,58C313,61 314,63 318,63M321.5,52V64M320,54L321.5,52L323,54M320,62L321.5,64L323,62" stroke="#b0b0b0" stroke-width="1.1" fill="none"/>
<!-- tile/cascade -->
<g shape-rendering="crispEdges">
 <rect x="340.5" y="51.5" width="15" height="14" fill="#fff" stroke="#000080"/>
 <rect x="341" y="52" width="14" height="2" fill="#000080"/>
 <rect x="341" y="58" width="14" height="2" fill="#000080"/>
 <rect x="362.5" y="51.5" width="10" height="7" fill="#fff" stroke="#000080"/><rect x="363" y="52" width="9" height="2" fill="#000080"/>
 <rect x="365.5" y="55.5" width="10" height="7" fill="#fff" stroke="#000080"/><rect x="366" y="56" width="9" height="2" fill="#000080"/>
 <rect x="368.5" y="58.5" width="10" height="7" fill="#fff" stroke="#000080"/><rect x="369" y="59" width="9" height="2" fill="#000080"/>
 <rect x="386.5" y="51.5" width="9" height="7" fill="#fff" stroke="#000080"/><rect x="387" y="52" width="8" height="2" fill="#000080"/>
 <rect x="389.5" y="55.5" width="9" height="7" fill="#fff" stroke="#000080"/><rect x="390" y="56" width="8" height="2" fill="#000080"/>
 <rect x="392.5" y="59.5" width="8" height="6" fill="#fff" stroke="#000080"/><rect x="393" y="60" width="7" height="2" fill="#000080"/>
 <rect x="394" y="63" width="5" height="1" fill="#000"/>
</g>
<g fill="#fff" shape-rendering="crispEdges"><rect x="342" y="52" width="1" height="1"/><rect x="352" y="52" width="1" height="1"/><rect x="354" y="52" width="1" height="1"/><rect x="342" y="58" width="1" height="1"/><rect x="352" y="58" width="1" height="1"/><rect x="354" y="58" width="1" height="1"/></g>
<path d="M403,56L399,52M399,55V52H402" stroke="#000" stroke-width="1.1" fill="none"/>
<!-- scissors / copy / paste / find -->
<g fill="none">
 <path d="M423,51L427.5,60M428,51L423.5,60" stroke="#000" stroke-width="1.2"/>
 <circle cx="423" cy="63" r="1.9" stroke="#0000c0" stroke-width="1.1"/>
 <circle cx="428" cy="63" r="1.9" stroke="#0000c0" stroke-width="1.1"/>
</g>
<g shape-rendering="crispEdges">
 <path d="M441.5,51.5H446.5L448.5,53.5V61.5H441.5Z" fill="#fff" stroke="#000"/>
 <path d="M447.5,55.5H452.5L455.5,58.5V66.5H447.5Z" fill="#fff" stroke="#000080"/>
 <path d="M443,54H446M443,56H446M443,58H446M449,60H454M449,62H454M449,64H454" stroke="#000"/>
 <rect x="464.5" y="52.5" width="12" height="12" rx="2" fill="#b0b0b0" stroke="#a0a0a0"/>
 <rect x="470.5" y="58.5" width="8" height="7" fill="#d0d0d0" stroke="#a8a8a8"/>
</g>
<path d="M490,52H493V55H494V58.5H495V55H496V52H499V55H500V58H502V66H495V62H494V66H487V58H489V55H490Z" fill="#000"/>
<g fill="#fff"><rect x="491" y="53" width="1" height="1"/><rect x="497" y="53" width="1" height="1"/><rect x="490" y="56" width="1" height="1"/><rect x="496" y="56" width="1" height="1"/><rect x="489" y="58.5" width="1" height="2"/><rect x="493" y="58.5" width="1" height="2"/><rect x="496" y="58.5" width="1" height="2"/><rect x="488" y="62" width="1" height="2"/><rect x="498" y="62" width="1" height="2"/></g>
<!-- print preview / printer -->
<g shape-rendering="crispEdges">
 <path d="M522.5,52.5H531L532,54V57.5H522.5Z" fill="#fff" stroke="#000"/>
 <path d="M520,56.5H532.5V64.5H518.5V58Z" fill="#fff" stroke="#000"/>
 <rect x="520" y="58" width="12" height="6" fill="#c8c8c8"/>
 <path d="M520,65.5H532" stroke="#000"/>
 <path d="M540.5,58.5L542.5,55.5H545.5V51.5H553.5V55.5L556.5,58.5V64.5H540.5Z" fill="#fff" stroke="#000"/>
 <path d="M542,60H555M542,62H555M547,53H552M547,55H552" stroke="#000"/>
 <rect x="547" y="58" width="3" height="1" fill="#ffff00"/>
</g>
<!-- pencil -->
<path d="M573.5,63.5L574,59.5L578.5,51.5L581,52.5L576.5,61Z" fill="#ffff00" stroke="#000" stroke-width="1.1" stroke-linejoin="round"/>
<path d="M578.6,51.8L580.8,52.8" stroke="#ff0000" stroke-width="1.5"/>
<path d="M574.5,57.5L576.5,58.5M576,55L578,56" stroke="#ff0000" stroke-width="0.8"/>
<path d="M573,64.5H587" stroke="#0000ff" stroke-width="1.2" shape-rendering="crispEdges"/>
<!-- ground -->
<g shape-rendering="crispEdges" fill="none" stroke="#000">
 <path d="M601.5,51V58"/>
</g>
<path d="M594,58.5H609L601.5,65.5Z" fill="#ececec" stroke="#000" stroke-width="1.1"/>
<path d="M596,59.8H607" stroke="#808000" stroke-width="1"/>
<rect x="617.5" y="52.5" width="14" height="9" rx="1.5" fill="#fff" stroke="#000"/>
<rect x="619" y="54" width="11" height="6" fill="none" stroke="#c8c080" stroke-width="0.8"/>
<path d="M624.5,62V66" stroke="#000" shape-rendering="crispEdges"/>
<path d="M622.5,60V56L623.5,54.5H625.5L626.5,56V60M622.5,57.5H626.5" stroke="#000" stroke-width="1.1" fill="none"/>
<!-- resistor, cap, ind, diode, component -->
<g fill="none" stroke="#000">
 <path d="M647,51.5L652.5,55.5L643,60L648,63V66"/>
 <path d="M666,54V63M670,54V63M664,58.5H672M668,50V55M668,63V67" shape-rendering="crispEdges" stroke="none"/>
 <path d="M664,56.5H676M664,59.5H676M670,52V56.5M670,59.5V66" shape-rendering="crispEdges"/>
 <path d="M691,52C696,52 696,58 692,58C696,58 696,65 691,65"/>
 <path d="M710,56.5H725M717.5,51V66M710,65.5H725M711,56.5L717.5,64L724,56.5" shape-rendering="crispEdges"/>
 <path d="M735.5,52.5H740C745,52.5 745,64.5 740,64.5H735.5ZM732,55.5H735M732,61.5H735M744,58.5H747" shape-rendering="crispEdges"/>
</g>
<!-- hands -->
<g fill="#fff" stroke="#000" stroke-width="1.1" stroke-linejoin="round">
 <path d="M755.3,58.8L756.8,57.2L758.7,57.6L757.4,52.4L759,51.3L760.6,52.8L762.3,56.3L764.1,52.8L765.9,51.3L767.9,52.5L770.4,56.8L770.2,58.8L766.9,63.3V65.3H760.5V64.1Z"/>
 <path d="M779.3,58L781.3,56.3L782.8,53.8L785.9,53.3L790.4,55.3L791.7,57.4L791.2,59.8L788.3,62.9V64.6H782.3V62.4Z"/>
</g>
<path d="M761,53L762,56M766,53L768,57M784.5,54V57M787.5,54V57" stroke="#000" stroke-width="0.9" fill="none"/>
<!-- undo redo -->
<path d="M806.5,57.5C807.5,54.5 809,53.4 810,53.4C813.5,53.4 815.6,56 815.6,58.8C815.6,62 813,64.5 810,64.5C808.8,64.5 808,64 807.4,63.4" fill="none" stroke="#000" stroke-width="1.2"/>
<path d="M808,54.5C810,53.2 813,53.4 815,57" fill="none" stroke="#807000" stroke-width="1.2"/>
<path d="M802.3,55V59.8H806.5Z" fill="#000" stroke="#000" stroke-width="0.8"/>
<path d="M834.5,57.5C833.5,54.5 832,53.4 831,53.4C827.5,53.4 825.4,56 825.4,58.8C825.4,62 828,64.5 831,64.5C832.2,64.5 833,64 833.6,63.4" fill="none" stroke="#b0b0b0" stroke-width="1.2"/>
<path d="M838.7,55V59.8H834.5Z" fill="#b0b0b0" stroke="#b0b0b0" stroke-width="0.8"/>
<!-- mirror rotate disabled -->
<g fill="none" stroke="#a8a8a8" stroke-width="1.2" shape-rendering="crispEdges">
 <path d="M852,57H848V66H852M848,61.5H851M855,60H862M855,60V64M858.5,60V64M862,60V64"/>
 <path d="M875,57H871V66H875M871,61.5H874M882,57H886V66H882M883,61.5H886"/>
</g>
<path d="M850,55C852,51 858,51 861,54M872,55C874,51 880,51 883,54" fill="none" stroke="#a8a8a8"/>
<text x="892" y="65" font-family="Liberation Serif" font-style="italic" font-weight="bold" font-size="15" fill="#000">Aa</text>
<text x="917" y="63" font-size="12" fill="#000">.op</text>
<defs><filter id="bl" x="-10%" y="-50%" width="120%" height="200%"><feGaussianBlur stdDeviation="1.2"/></filter></defs>
<g filter="url(#bl)" opacity="0.3" fill="#55524d" font-family="Liberation Serif">
 <text x="1149" y="749" font-size="43">(Bild 7). sled</text>
 <text x="1235" y="785" font-size="43">V</text>
</g>
<path d="M1100,728V768" stroke="#8a8782" stroke-width="1" stroke-dasharray="2,3" opacity="0.5"/>
<!-- windows logo -->
<path d="M11.8,738.2L23.1,736.8V747H11.8ZM24,736.6L38.3,734.7V747H24ZM11.8,748H23.1V757.9L11.8,756.3ZM24,748H38.3V760L24,758.2Z" fill="#fff"/>
<!-- speaker -->
<defs>
 <linearGradient id="wood" x1="0" y1="0" x2="1" y2="1"><stop offset="0" stop-color="#e2aa64"/><stop offset="0.5" stop-color="#c98a44"/><stop offset="1" stop-color="#a8682c"/></linearGradient>
 <radialGradient id="cone" cx="0.45" cy="0.4" r="0.6"><stop offset="0" stop-color="#5a5a5a"/><stop offset="0.6" stop-color="#333"/><stop offset="1" stop-color="#1e1e1e"/></radialGradient>
 <linearGradient id="fold" x1="0" y1="0" x2="0" y2="1"><stop offset="0" stop-color="#fbe9a8"/><stop offset="1" stop-color="#e9cc78"/></linearGradient>
 <linearGradient id="brk" x1="0" y1="0" x2="0" y2="1"><stop offset="0" stop-color="#bfe4fa"/><stop offset="1" stop-color="#5ab0e6"/></linearGradient>
 <radialGradient id="glob" cx="0.6" cy="0.35" r="0.7"><stop offset="0" stop-color="#5aa8e8"/><stop offset="0.6" stop-color="#2a6cc0"/><stop offset="1" stop-color="#163c8a"/></radialGradient>
</defs>
<rect x="66" y="733" width="30" height="30" rx="6" fill="url(#wood)"/>
<circle cx="81" cy="748" r="12.5" fill="#262626"/>
<circle cx="81" cy="748" r="11" fill="url(#cone)" stroke="#4a4a4a" stroke-width="0.7"/>
<circle cx="81" cy="748" r="7.5" fill="none" stroke="#222" stroke-width="0.8"/>
<circle cx="81" cy="747.5" r="4.2" fill="#1c1c1c"/>
<circle cx="80.3" cy="746.5" r="2" fill="#4e4e4e"/>
<!-- folder -->
<path d="M128.5,737H138L139.5,739H158.5V762H128.5Z" fill="#e8cc7a" stroke="#d4b460" stroke-width="0.6"/>
<rect x="130.5" y="735.5" width="11" height="4" fill="#fff"/><rect x="131" y="735.5" width="3" height="2" fill="#22b022"/>
<rect x="138.5" y="737.5" width="11" height="4" fill="#fff"/><rect x="139" y="737.5" width="3" height="2" fill="#d02828"/>
<rect x="145.5" y="739.5" width="11" height="4" fill="#fff"/><rect x="148" y="740" width="3" height="2" fill="#2a90e0"/>
<path d="M127.5,742H144L145.5,741H159V762.5H127.5Z" fill="url(#fold)" stroke="#d8bc6c" stroke-width="0.6"/>
<path d="M131.5,763.5V752.5H154V763.5H148V757H137.5V763.5Z" fill="url(#brk)" stroke="#3c9ad8" stroke-width="0.8"/>
<!-- firefox -->
<circle cx="205.5" cy="748" r="15" fill="#e55b13"/>
<circle cx="208.5" cy="745" r="11.5" fill="url(#glob)"/>
<path d="M190.5,745C191,738 195,735 198,735C197,738 199,740 202,741C199,743 198,746 199.5,749C201.5,753 207,755 212,753C216,751.5 219,748 220,744C221,752 215,762 205,763C196,763 190,755 190.5,745Z" fill="#f07a18"/>
<path d="M198,735C197.5,738 199.5,740.5 203,741.5C204,740 206,739 207.5,740C205.5,737 202,735 198,735Z" fill="#f6a22a"/>
<path d="M214,735.5C218,738 220.5,742 220.5,747" stroke="#ffc848" stroke-width="1.6" fill="none"/>
<!-- paint -->
<ellipse cx="266" cy="750" rx="13" ry="10" fill="#bcdcf0" stroke="#80b0d0" stroke-width="1"/>
<circle cx="264.5" cy="751.5" r="2" fill="#8a8781"/>
<circle cx="257" cy="749.5" r="2.2" fill="#e03030"/>
<circle cx="261" cy="744.5" r="2.2" fill="#40b040"/>
<circle cx="268" cy="742.5" r="2.2" fill="#f0b020"/>
<path d="M266,763L279,740" stroke="#e08a20" stroke-width="2.2"/>
<path d="M277,741L282,733L284,735L279,742Z" fill="#d8a060"/>
<!-- LTspice active box -->
<rect x="300" y="729" width="58" height="38" fill="#c3c0bb" stroke="#f2f2f2" stroke-width="2"/>
<path d="M327.90,738.20L326.20,738.20L322.60,740.60L319.70,745.70L317.50,751.10L313.10,757.30L313.10,757.70L328.00,757.70L329.10,755.50L325.50,754.40L323.30,751.90L323.30,746.00L325.10,742.00ZM328.40,738.20L344.80,738.20L340.80,743.10L337.90,749.30L335.00,754.40L330.60,757.70L329.90,757.70L332.10,754.40L334.20,750.40L334.60,744.20L332.40,740.90L328.00,740.60Z" fill="#800000"/>
<!-- skype box -->
<rect x="361.5" y="729.5" width="58" height="37" fill="#aeaba6" stroke="#c8c6c2" stroke-width="1"/>
<circle cx="385" cy="743" r="9" fill="#00aff0"/>
<circle cx="397" cy="755" r="9" fill="#00aff0"/>
<circle cx="391" cy="749" r="12.5" fill="#00aff0"/>
<text x="380" y="757" font-size="23" font-weight="bold" fill="#fff">S</text>
<circle cx="399.5" cy="757.5" r="4.6" fill="#fff" stroke="#80c020" stroke-width="1.6"/>
<!-- tray -->
<path d="M1136.5,751H1144.5L1140.5,746.5Z" fill="#e4e4f4" stroke="#6a6a7a" stroke-width="0.5"/>
<path d="M1158.5,741.5V756" stroke="#fff" stroke-width="1.6"/>
<path d="M1159,742.5C1162,741.5 1165,744 1168,744C1170,744 1171,743.5 1172.5,744.5L1170,749.5C1168,750 1166,749 1164,748.5C1162,748 1160.5,748.5 1159,749Z" fill="#f4f4f4" stroke="#8a8a8a" stroke-width="0.5"/>
<path d="M1188.5,741.5H1201.5V750C1201.5,752.5 1198,755.5 1195,757C1192,755.5 1188.5,752.5 1188.5,750Z" fill="#fff"/>
<path d="M1189.5,742.5H1193.5V748.5H1189.5ZM1196.5,742.5H1200.5V748.5H1196.5Z" fill="#e82030"/>
<path d="M1191,744H1192.5M1197.5,745H1199.5" stroke="#fff" stroke-width="0.8"/>
<path d="M1195,742V754M1190,749.5L1195,754.5L1200,749.5" stroke="#3e5878" stroke-width="2.2" fill="none"/>
<rect x="1217.8" y="742.8" width="8.4" height="13" fill="none" stroke="#fff" stroke-width="1.3"/>
<rect x="1219.5" y="741.3" width="5" height="1.5" fill="#fff"/>
<rect x="1219.2" y="744.2" width="5.6" height="5" fill="#6e6e6e"/>
<rect x="1219.2" y="749.8" width="5.6" height="4.8" fill="#fff"/>
<path d="M1235.5,751.5H1237.8V754.5H1235.5ZM1238.8,749.5H1241.1V754.5H1238.8ZM1242.1,747.5H1244.4V754.5H1242.1ZM1245.4,745.5H1247.7V754.5H1245.4Z" fill="#fff" stroke="#5a5a5a" stroke-width="0.4"/>
<path d="M1248.7,743.3H1251V754.5H1248.7Z" fill="#8a8a8a" stroke="#5a5a5a" stroke-width="0.4"/>
<path d="M1259.5,746.5H1262.5L1267,742V756L1262.5,751.5H1259.5Z" fill="#fff" stroke="#666" stroke-width="0.4"/>
<path d="M1268.5,746C1269.8,747.5 1269.8,750.5 1268.5,752M1270.5,744C1272.8,746.5 1272.8,751.5 1270.5,754M1272.5,742C1275.8,745.5 1275.8,752.5 1272.5,756" stroke="#fff" stroke-width="1.1" fill="none"/>
<g fill="#fff" font-size="11">
 <text x="1321" y="745" text-anchor="middle">17:15</text>
 <text x="1320.5" y="762" text-anchor="middle">04.12.2014</text>
</g>
</svg>
</body></html>
